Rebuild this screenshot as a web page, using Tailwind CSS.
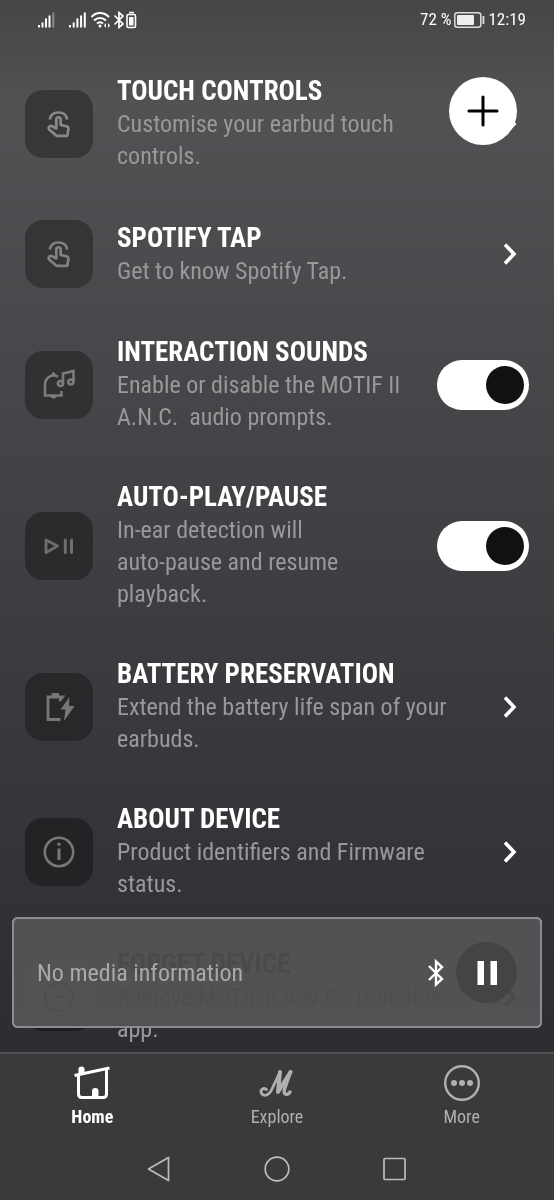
<!DOCTYPE html>
<html lang="en">
<head>
<meta charset="utf-8">
<meta name="viewport" content="width=device-width, initial-scale=1">
<title>Device settings</title>
<script src="https://cdn.jsdelivr.net/npm/@tailwindcss/browser@4"></script>
</head>
<body class="flex min-h-screen flex-col bg-[#3a3a3c] font-['Roboto_Condensed','Arial_Narrow','Roboto',sans-serif] text-white">

<svg class="hidden" aria-hidden="true">
  <symbol id="chevron" viewBox="0 0 16 24"><path d="M3 2.500 L12 12 L3 21.500" fill="none" stroke="currentColor" stroke-width="3.600"/></symbol>
  <symbol id="touch" viewBox="0 0 24 28">
    <g fill="none" stroke="currentColor" stroke-width="2.700" stroke-linejoin="round" stroke-linecap="round">
      <path d="M2.800 9.500 C3.500 5 7 2.500 11.500 2.500 C16 2.500 19.500 5 20.200 9.500" stroke-linecap="butt"/>
      <path d="M9.300 18.500 V9.500 C9.300 6.500 13.700 6.500 13.700 9.500 V15 L19.500 16.300 C21 16.700 21.600 17.500 21.400 19 L20.300 25.800 H9.500 L2.200 19.500 C1 18 2 15.800 4.200 15.800 C6 15.800 7 18.500 9.300 18.500"/>
    </g>
  </symbol>
</svg>

<div class="relative flex-1 overflow-hidden bg-linear-to-b from-[#464648] via-[#515254] via-10% to-[#2d2c31]">
  <header class="flex h-[39px] items-center justify-between pr-7 pl-[37px] text-[17px]">
    <svg class="h-5 w-[100px]" viewBox="0 0 100 20" fill="none" stroke="#fff" stroke-width="2" aria-label="Signal, Wi-Fi, Bluetooth">
      <path d="M2 17.500 V15 M5.500 17.500 V12.500 M9 17.500 V8.500 M12.500 17.500 V5.500"/><path d="M16.300 17.500 V2.500" stroke="#8a8a8c"/>
      <path d="M33 17.500 V15 M36.700 17.500 V12.500 M40.400 17.500 V8.500 M44.100 17.500 V5.500 M47.800 17.500 V2.500"/>
      <path d="M54.500 7 C59 1.500 67 1.500 72 7 M57 10.500 C60.500 7 65.500 7 69 10.500 M60 13.500 C62 11.800 64 11.800 66 13.500"/>
      <circle cx="63" cy="16" r="1.500" fill="#fff" stroke="none"/><path d="M69 13 L67 15.500 L69 18 Z M71 13 L73 15.500 L71 18 Z" fill="#fff" stroke="none"/>
      <path d="M77.500 5.500 L86 14 L82 17.500 V2.500 L86 6 L77.500 14.500" stroke-width="1.700"/>
      <path d="M92 2.500 H97 M91.500 4.500 H97 Q98.500 4.500 98.500 6 V16 Q98.500 17.500 97 17.500 H91.500 Q90 17.500 90 16 V6 Q90 4.500 91.500 4.500" stroke-width="1.600"/><path d="M92 7 H96.500 V15.500 H92 Z" fill="#fff" stroke="none"/>
    </svg>
    <div class="flex items-center gap-[3px]">
      <span>72 %</span>
      <svg class="h-4 w-[31px]" viewBox="0 0 31 16" aria-hidden="true"><rect x="0.800" y="0.800" width="26" height="14.400" rx="2.500" fill="none" stroke="#ddd" stroke-width="1.500"/><rect x="3" y="3" width="17" height="10" rx="1" fill="#eee"/><rect x="28.500" y="4" width="1.800" height="8" fill="#ddd"/></svg>
      <span>12:19</span>
    </div>
  </header>

  <main class="flex flex-col gap-12 px-[25px] pt-9 pb-[7px] text-2xl/8 text-[#99999b] [&_h2]:text-[27px]/[33px] [&_h2]:font-bold [&_h2]:text-white">
    <a href="#touch-controls" class="flex items-center">
      <span class="mr-6 grid size-17 shrink-0 place-items-center rounded-[18px] bg-[#37373a] text-[#89898b]"><svg class="h-7 w-6"><use href="#touch"/></svg></span>
      <div class="flex-1"><h2>TOUCH CONTROLS</h2><p>Customise your earbud touch<br>controls.</p></div>
      <svg class="mr-[11px] h-6 w-4 text-white"><use href="#chevron"/></svg>
    </a>
    <a href="#spotify-tap" class="flex items-center">
      <span class="mr-6 grid size-17 shrink-0 place-items-center rounded-[18px] bg-[#353537] text-[#828284]"><svg class="h-7 w-6"><use href="#touch"/></svg></span>
      <div class="flex-1"><h2>SPOTIFY TAP</h2><p>Get to know Spotify Tap.</p></div>
      <svg class="mr-[11px] h-6 w-4 text-white"><use href="#chevron"/></svg>
    </a>
    <label class="flex items-center">
      <span class="mr-6 grid size-17 shrink-0 place-items-center rounded-[18px] bg-[#313133] text-[#7c7c7e]">
        <svg class="size-8" viewBox="0 0 32 32" fill="none" stroke="currentColor" stroke-width="2.600"><path d="M15 7.500 C8 4.500 2 9 2 16 V26.500 H18.500 V22"/><path d="M7 27 Q10.500 31.500 14 27 M8.500 6 L10.500 3 L12.500 6" fill="currentColor" stroke-width="1"/><path d="M20 15 V4.500 L30.500 2 V13"/><circle cx="17.500" cy="14.500" r="2.500"/><circle cx="27.800" cy="13" r="2.500"/></svg>
      </span>
      <div class="flex-1"><h2>INTERACTION SOUNDS</h2><p class="whitespace-pre-line">Enable or disable the MOTIF II
A.N.C.&nbsp; audio prompts.</p></div>
      <input type="checkbox" role="switch" checked class="h-[50px] w-[92px] shrink-0 appearance-none rounded-full bg-white before:mt-[6px] before:ml-[49px] before:block before:size-[38px] before:rounded-full before:bg-[#111]">
    </label>
    <label class="flex items-center">
      <span class="mr-6 grid size-17 shrink-0 place-items-center rounded-[18px] bg-[#2b2b2d] text-[#6e6e70]">
        <svg class="size-8" viewBox="0 0 32 32" fill="none" stroke="currentColor" stroke-width="2.800"><path d="M3 10 L14.500 16 L3 22.500 Z" stroke-linejoin="round"/><path d="M22.300 10 V22.500 M28.500 10 V22.500" stroke-width="3" stroke-linecap="round"/></svg>
      </span>
      <div class="flex-1"><h2>AUTO-PLAY/PAUSE</h2><p>In-ear detection will<br>auto-pause and resume<br>playback.</p></div>
      <input type="checkbox" role="switch" checked class="h-[50px] w-[92px] shrink-0 appearance-none rounded-full bg-white before:mt-[6px] before:ml-[49px] before:block before:size-[38px] before:rounded-full before:bg-[#111]">
    </label>
    <a href="#battery" class="flex items-center">
      <span class="mr-6 grid size-17 shrink-0 place-items-center rounded-[18px] bg-[#28282a] text-[#777779]">
        <svg class="size-8" viewBox="0 0 32 32" fill="none" stroke="currentColor" stroke-width="2.800"><path d="M17.500 28.500 H5 V6 H19.500 L16.500 10"/><path d="M8.500 2 H16 V6 H8.500 Z" fill="currentColor" stroke="none"/><path d="M26.500 6 L17.500 18.500 H22.500 L21 30 L31.500 15 H26 Z" fill="currentColor" stroke="none"/></svg>
      </span>
      <div class="flex-1"><h2>BATTERY PRESERVATION</h2><p>Extend the battery life span of your<br>earbuds.</p></div>
      <svg class="mr-[11px] h-6 w-4 text-white"><use href="#chevron"/></svg>
    </a>
    <a href="#about" class="flex items-center">
      <span class="mr-6 grid size-17 shrink-0 place-items-center rounded-[18px] bg-[#232325] text-[#777779]">
        <svg class="size-8" viewBox="0 0 32 32"><circle cx="16" cy="16" r="14.200" fill="none" stroke="currentColor" stroke-width="2.600"/><path d="M14.500 6.800 H17.500 V9.800 H14.500 Z M14.500 12.500 H17.500 V24 H14.500 Z" fill="currentColor"/></svg>
      </span>
      <div class="flex-1"><h2>ABOUT DEVICE</h2><p>Product identifiers and Firmware<br>status.</p></div>
      <svg class="mr-[11px] h-6 w-4 text-white"><use href="#chevron"/></svg>
    </a>
    <a href="#forget" class="flex items-center">
      <span class="mr-6 grid size-17 shrink-0 place-items-center rounded-[18px] bg-[#1f1f22] text-[#777779]">
        <svg class="size-8" viewBox="0 0 32 32" fill="none" stroke="currentColor" stroke-width="2.400"><circle cx="16" cy="16" r="14"/><path d="M11 16 H21"/></svg>
      </span>
      <div class="flex-1"><h2>FORGET DEVICE</h2><p class="whitespace-pre-line">Remove MOTIF II A.N.C.&nbsp; from this
app.</p></div>
      <svg class="mr-[11px] h-6 w-4 text-white"><use href="#chevron"/></svg>
    </a>
  </main>

  <button aria-label="Add device" class="absolute top-[77px] right-[37px] grid size-17 place-items-center rounded-full bg-white">
    <svg class="size-8" viewBox="0 0 32 32" stroke="#000" stroke-width="3" stroke-linecap="round"><path d="M16 2 V30 M2 16 H30"/></svg>
  </button>

  <section aria-label="Media player" class="absolute right-3 bottom-6 left-3 flex h-[111px] items-center rounded-md border-2 border-[#8c8c8e] bg-[#4c4d4f]/96 pr-[23px] pl-[23px] text-2xl text-[#a9a9ab] backdrop-invert">
    <p class="flex-1">No media information</p>
    <svg class="mr-3 h-7 w-4" viewBox="0 0 16 28" fill="none" stroke="#fff" stroke-width="2.400" aria-label="Bluetooth"><path d="M1 7 L14 20 L8 25.500 V2.500 L14 8 L1 21"/></svg>
    <button aria-label="Pause" class="grid size-[61px] place-items-center rounded-full bg-[#434345]/90">
      <svg class="size-6" viewBox="0 0 24 24" fill="#fff"><path d="M2.500 0 H9 V24 H2.500 Z M15.500 0 H22 V24 H15.500 Z"/></svg>
    </button>
  </section>
</div>

<footer class="border-t-2 border-[#505052]">
  <nav class="grid grid-cols-3 pt-[11px] text-lg/6 text-[#b0b0b2]">
    <a href="#home" aria-current="page" class="flex flex-col items-center gap-1 font-bold text-white">
      <svg class="size-9" viewBox="0 0 36 36" fill="none" stroke="currentColor" stroke-width="3"><path d="M0.500 10.500 L35.500 3"/><path d="M4.500 10 V29 Q4.500 32.500 8 32.500 H29 Q32.500 32.500 32.500 29 V4"/><path d="M4.500 10 V4 Q4.500 1.500 7.500 1.500 Q10.500 1.500 10.500 4 V9 Z M18 32 V26 Q18 23 21.200 23 Q24.500 23 24.500 26 V32 Z" fill="currentColor" stroke="none"/></svg>
      Home
    </a>
    <a href="#explore" class="flex flex-col items-center gap-1">
      <svg class="size-9" viewBox="0 0 36 36" fill="none" stroke="currentColor" stroke-linecap="round" stroke-linejoin="round"><path d="M7.500 24.500 C3.500 21.500 0.500 26 3 29 C6 32 10.500 29.500 12.500 25 L21 7" stroke-width="2.800"/><path d="M21 7 L19 27 L31.500 7" stroke-width="4"/><path d="M31.500 7 L25.500 24 C24 30 28.500 31 31 27" stroke-width="3.500"/></svg>
      Explore
    </a>
    <a href="#more" class="flex flex-col items-center gap-1">
      <svg class="size-9" viewBox="0 0 36 36" fill="currentColor"><circle cx="18" cy="18" r="16.800" fill="none" stroke="currentColor" stroke-width="2.400"/><circle cx="10" cy="18" r="3"/><circle cx="18" cy="18" r="3"/><circle cx="26" cy="18" r="3"/></svg>
      More
    </a>
  </nav>
  <div class="flex justify-center gap-[92px] pt-[27px] pb-[18px] text-[#bcbcbe]">
    <button aria-label="Back"><svg class="block size-[26px]" viewBox="0 0 26 26" fill="none" stroke="currentColor" stroke-width="1.700" stroke-linejoin="round"><path d="M22.500 1.500 V24.500 L2.500 13 Z"/></svg></button>
    <button aria-label="Home screen"><svg class="block size-[26px]" viewBox="0 0 26 26" fill="none" stroke="currentColor" stroke-width="1.700"><circle cx="13" cy="13" r="11.800"/></svg></button>
    <button aria-label="Recent apps"><svg class="block size-[26px]" viewBox="0 0 26 26" fill="none" stroke="currentColor" stroke-width="1.700"><rect x="2" y="2.500" width="21" height="21" rx="1"/></svg></button>
  </div>
</footer>
</body>
</html>
